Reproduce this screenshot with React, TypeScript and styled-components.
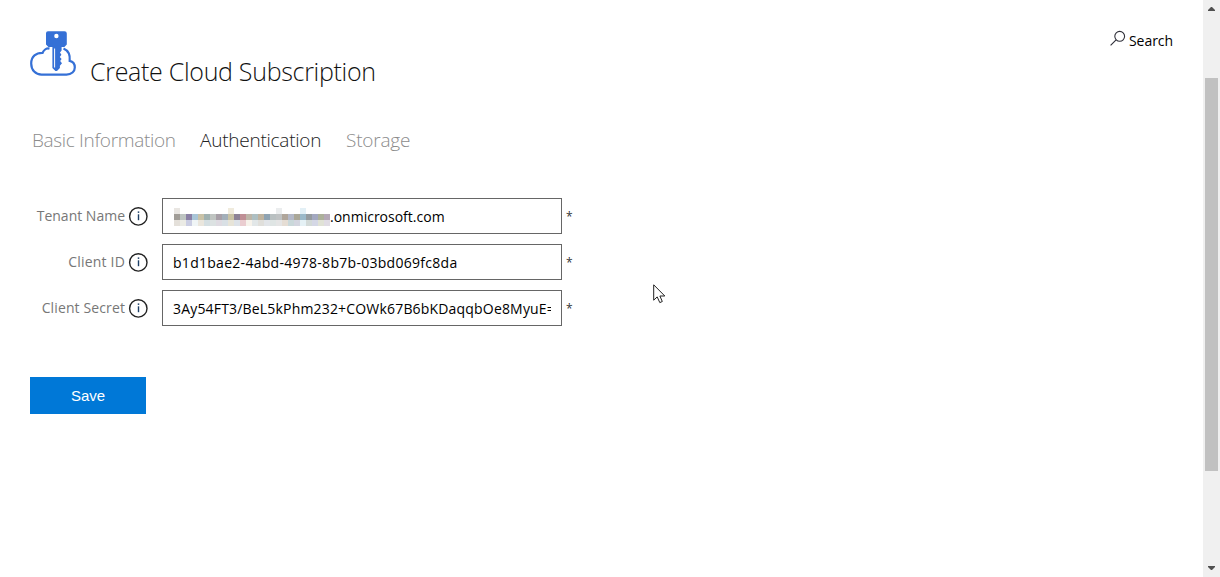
import React from "react";
import styled, { createGlobalStyle } from "styled-components";

const GlobalStyle = createGlobalStyle`
  * { box-sizing: border-box; }
  body {
    margin: 0;
    background: #fff;
    overflow: hidden;
    font-family: "Open Sans", "Noto Sans", sans-serif;
  }
`;

const Window = styled.div`
  display: flex;
  height: 577px;
  position: relative;
`;

const Page = styled.main`
  flex: 1;
  padding: 30px 30px 0;
`;

const Header = styled.header`
  display: flex;
  align-items: flex-start;
  height: 60px;
`;

const Title = styled.h1`
  margin: 23px 0 0 14px;
  font-size: 25px;
  line-height: 36px;
  font-weight: 300;
  letter-spacing: -0.3px;
  color: #111;
  white-space: nowrap;
`;

const SearchLink = styled.a`
  display: flex;
  align-items: flex-start;
  margin-left: auto;
  color: #000;
  font-size: 14px;
  line-height: 22px;
  letter-spacing: -0.05px;

  svg { margin-right: 3px; }
`;

const Tabs = styled.nav`
  display: flex;
  gap: 25px;
  margin-top: 36px;
  padding-left: 2px;
`;

const Tab = styled.a<{ $active?: boolean; $width: number; $spacing: number }>`
  width: ${(p) => p.$width}px;
  font-size: 19px;
  line-height: 28px;
  font-weight: 300;
  letter-spacing: ${(p) => p.$spacing}px;
  white-space: nowrap;
  color: ${(p) => (p.$active ? "#222" : "#8c8c8c")};
`;

const Form = styled.form`
  display: flex;
  flex-direction: column;
  gap: 10px;
  margin-top: 44px;
`;

const Row = styled.div`
  display: flex;
  align-items: center;
  height: 36px;
`;

const Label = styled.label<{ $spacing: number }>`
  width: 95px;
  text-align: right;
  font-size: 14px;
  line-height: 20px;
  letter-spacing: ${(p) => p.$spacing}px;
  color: #777;
  white-space: nowrap;
`;

const Info = styled.span`
  display: flex;
  margin: 0 14px 0 3px;
`;

const Field = styled.div`
  display: flex;
  align-items: center;
  width: 400px;
  height: 36px;
  padding: 2px 10px 0;
  border: 1px solid #666;
`;

const Value = styled.span<{ $spacing: number }>`
  flex: 1;
  overflow: hidden;
  white-space: nowrap;
  font-size: 14px;
  line-height: 20px;
  letter-spacing: ${(p) => p.$spacing}px;
  color: #000;
`;

const Mosaic = styled.span`
  display: grid;
  grid-template-columns: repeat(26, 6px);
  grid-auto-rows: 6px;
  margin-left: 1px;
`;

const Cell = styled.i<{ $color: string }>`
  background: ${(p) => p.$color};
`;

const Required = styled.span`
  margin: 1px 0 0 4px;
  font-size: 12px;
  line-height: 20px;
  color: #333;
`;

const SaveButton = styled.button`
  width: 116px;
  height: 37px;
  margin-top: 51px;
  padding: 0;
  border: 0;
  background: #0078d7;
  color: #fff;
  font: 15px/37px "Liberation Sans", sans-serif;
`;

const ScrollBar = styled.div`
  display: flex;
  flex-direction: column;
  align-items: center;
  width: 17px;
  background: #f0f0f0;
`;

const ArrowSlot = styled.div`
  height: 17px;
`;

const Thumb = styled.div`
  width: 13px;
  height: 393px;
  margin: 61px 0 auto;
  background: #c1c1c1;
`;

const Pointer = styled.svg`
  position: absolute;
  left: 653px;
  top: 284px;
`;

const none = "#ffffff";
const mosaicTop = Array.from({ length: 26 }, (_, i) =>
  i === 0 ? "#e9e6e2" : i === 9 ? "#f0ebdd" : i === 17 ? "#ebedee" : i === 21 ? "#e3f0f6" : none
);
const mosaicMiddle = [
  "#a19d97", "#bdc4c1", "#8a80a5", "#a9c5d7", "#c9c2a7", "#a0b1b0", "#bfc4c1",
  "#a79fa7", "#a3afb9", "#c9c2a3", "#8d8295", "#bf8f95", "#bdb6a8", "#aebfc2",
  "#bfb39f", "#8fa3b2", "#b9c0c1", "#bfc2c3", "#b0a69b", "#b3b8c8", "#aaa798",
  "#9bb9c9", "#959b9f", "#a3a8c0", "#acb09a", "#b4a8b6",
];
const mosaicBottom = [
  "#e4e0da", "#ebebe5", "#cbcee3", "#f0f5f6", "#eae6dd", "#d5dfe2", "#dce2e2",
  "#dfdbe2", "#d9e0e5", "#e7e4d8", "#dde2e8", "#eacdd0", "#f7f3eb", "#e2e7e8",
  "#e0dfdb", "#e2e5e9", "#dfe5e4", "#e5e5e5", "#e5ddd4", "#cad8da", "#d3d5df",
  "#e5f1f5", "#d3dad8", "#d4d7e5", "#e0e2d6", "#e0dce4",
];
const mosaic = [...mosaicTop, ...mosaicMiddle, ...mosaicBottom];

const CloudKeyIcon = () => (
  <svg width="46" height="47" viewBox="0 0 46 47" fill="none">
    <path
      d="M19.5 18.6C16.6 17.8 13.8 20 12.6 22.8C6.2 22.6 1.2 26.4 1.2 33.5C1.2 40.3 5.7 44.6 11.5 44.6H36.5C41.5 44.6 44.8 41.4 44.8 37.4C44.8 33.8 42.6 31.4 39.7 30.8C40.3 24.6 37.8 20.2 33.5 18.4"
      stroke="#3570d6"
      strokeWidth="2.2"
    />
    <path
      fillRule="evenodd"
      d="M18 1.3H34.5Q36.8 1.3 36.8 3.6V14.6L34.4 17H18.4L16 14.6V3.3Q16 1.3 18 1.3ZM26.4 3.8A2.2 2.2 0 1 0 26.4 8.2A2.2 2.2 0 1 0 26.4 3.8Z"
      fill="#3570d6"
    />
    <path
      d="M22.4 17H31.6V20.5L30 22.6L31.4 24.8L29.8 27L31.6 29L30.2 31L32 33.2L29.9 35.8V38L27 41H25.4L22.4 38Z"
      fill="#3570d6"
    />
    <path d="M24.6 18.5V37.5" stroke="#fff" strokeWidth="1" />
  </svg>
);

const InfoIcon = () => (
  <svg width="20" height="20" viewBox="0 0 20 20" fill="none">
    <circle cx="10.3" cy="10.4" r="8.7" stroke="#222" strokeWidth="1.4" />
    <path d="M10.5 8.3V14.2" stroke="#1d3f66" strokeWidth="1.4" />
    <path d="M10.5 5.4V6.9" stroke="#1d3f66" strokeWidth="1.5" />
  </svg>
);

const SearchIcon = () => (
  <svg width="16" height="17" viewBox="0 0 16 17" fill="none" stroke="#30303a">
    <circle cx="9.7" cy="6.3" r="4.9" strokeWidth="1.1" />
    <path d="M6.1 9.8L.6 15.3" strokeWidth="1.2" />
  </svg>
);

const Arrow = ({ down }: { down?: boolean }) => (
  <svg width="7" height="17" viewBox="0 0 7 17">
    <path d={down ? "M0 6H7V7L4 10H3L0 7Z" : "M0 11H7V10L4 7H3L0 10Z"} fill="#505050" />
  </svg>
);

const fields = [
  { label: "Tenant Name", value: ".onmicrosoft.com", masked: true, spacing: 0, labelSpacing: 0 },
  { label: "Client ID", value: "b1d1bae2-4abd-4978-8b7b-03bd069fc8da", spacing: 0.28, labelSpacing: 0.2 },
  { label: "Client Secret", value: "3Ay54FT3/BeL5kPhm232+COWk67B6bKDaqqbOe8MyuE=", spacing: 0.18, labelSpacing: 0.12 },
];

export default function App() {
  return (
    <Window>
      <GlobalStyle />
      <Page>
        <Header>
          <CloudKeyIcon />
          <Title>Create Cloud Subscription</Title>
          <SearchLink>
            <SearchIcon />
            Search
          </SearchLink>
        </Header>
        <Tabs>
          <Tab $width={143} $spacing={-0.33}>Basic Information</Tab>
          <Tab $width={121} $spacing={-0.24} $active>Authentication</Tab>
          <Tab $width={65} $spacing={-0.2}>Storage</Tab>
        </Tabs>
        <Form>
          {fields.map((f) => (
            <Row key={f.label}>
              <Label $spacing={f.labelSpacing}>{f.label}</Label>
              <Info><InfoIcon /></Info>
              <Field>
                {f.masked && (
                  <Mosaic>
                    {mosaic.map((c, i) => <Cell key={i} $color={c} />)}
                  </Mosaic>
                )}
                <Value $spacing={f.spacing}>{f.value}</Value>
              </Field>
              <Required>*</Required>
            </Row>
          ))}
        </Form>
        <SaveButton>Save</SaveButton>
      </Page>
      <ScrollBar>
        <ArrowSlot><Arrow /></ArrowSlot>
        <Thumb />
        <ArrowSlot><Arrow down /></ArrowSlot>
      </ScrollBar>
      <Pointer width="13" height="20" viewBox="0 0 13 20">
        <path
          d="M.7 .8V16.2L4.2 12.9L6.8 18.6L9.3 17.5L6.9 12H11.8Z"
          fill="#fff"
          stroke="#222"
          strokeWidth="1"
        />
      </Pointer>
    </Window>
  );
}
